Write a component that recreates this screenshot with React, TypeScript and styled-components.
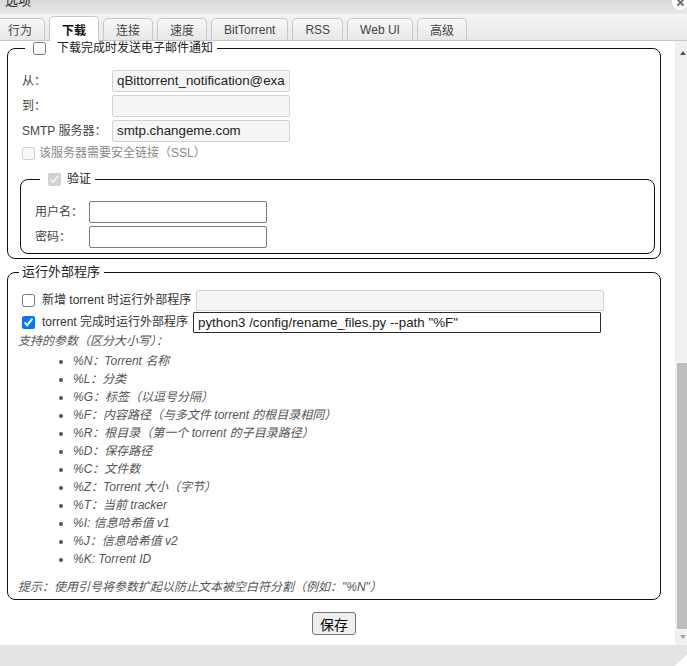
import React from 'react';
import styled, { createGlobalStyle, css } from 'styled-components';

const GlobalStyle = createGlobalStyle`
  *, *::before, *::after { box-sizing: border-box; }
  html, body { margin: 0; padding: 0; background: #fff; }
  body {
    font-family: 'Liberation Sans', 'Noto Sans CJK SC', sans-serif;
    font-size: 12px;
    color: #333;
  }
`;

const Window = styled.div`
  width: 687px;
  height: 666px;
  display: flex;
  flex-direction: column;
  overflow: hidden;
  background: #fff;
`;

const TitleBar = styled.header`
  flex: none;
  height: 14px;
  display: flex;
  align-items: flex-start;
  padding-left: 5px;
  background: linear-gradient(#d8d8d8, #e8e8e8);
  overflow: hidden;
`;

const Title = styled.span`
  margin-top: -7px;
  font-size: 13px;
  line-height: 16px;
  color: #222;
`;

const CloseButton = styled.button`
  margin: -6px -1px 0 auto;
  width: 16px;
  height: 16px;
  padding: 0;
  border: 0;
  border-radius: 50%;
  background: #fff;
  display: grid;
  place-items: center;
`;

const TabBar = styled.nav`
  flex: none;
  height: 27px;
  display: flex;
  align-items: flex-end;
  gap: 4px;
  background: linear-gradient(#f4f4f4, #e9e9e9);
  border-bottom: 1px solid #c6c6c6;

  & > :first-child {
    margin-left: -5px;
  }
`;

const Tab = styled.div<{ $active?: boolean }>`
  height: 22px;
  padding: 0 12px;
  display: flex;
  align-items: center;
  border: 1px solid #c8c8c8;
  border-bottom: 0;
  border-radius: 5px 5px 0 0;
  background: linear-gradient(#f8f8f8, #e7e7e7);
  color: #444;
  white-space: nowrap;

  ${({ $active }) =>
    $active &&
    css`
      height: 25px;
      margin-bottom: -1px;
      background: #fff;
      color: #111;
      font-weight: bold;
    `}
`;

const Body = styled.div`
  flex: 1;
  min-height: 0;
  display: flex;
`;

const Viewport = styled.main`
  flex: 1;
  min-width: 0;
  overflow: hidden;
  background: #fff;
`;

const ScrollContent = styled.div<{ $scrollTop: number }>`
  margin-top: ${({ $scrollTop }) => -$scrollTop}px;
`;

const OuterGroup = styled.fieldset<{ $top: number; $bottom: number }>`
  min-width: 0;
  width: 654px;
  margin: ${({ $top }) => $top}px 0 0 7px;
  padding: 0 6px ${({ $bottom }) => $bottom}px 10px;
  border: 1px solid #111;
  border-radius: 8px;
`;

const InnerGroup = styled.fieldset`
  min-width: 0;
  width: 635px;
  margin: 8px 0 0 2px;
  padding: 0 6px 4px 14px;
  border: 1px solid #111;
  border-radius: 8px;
`;

const Legend = styled.legend<{ $indent: number }>`
  display: flex;
  align-items: center;
  height: 16px;
  margin-left: ${({ $indent }) => $indent}px;
  padding: 0 4px;
  color: #222;
  line-height: 16px;
`;

const LegendTitle = styled.span`
  font-size: 13px;
  margin-left: -1px;
`;

const Check = styled.input.attrs({ type: 'checkbox' })<{ $gap: number }>`
  flex: none;
  width: 13px;
  height: 13px;
  margin: 0 ${({ $gap }) => $gap}px 0 4px;
`;

const FieldGrid = styled.div<{ $label: number; $pad: number }>`
  display: grid;
  grid-template-columns: ${({ $label }) => $label}px auto;
  grid-auto-rows: 25px;
  align-items: center;
  justify-content: start;
  padding: 12px 0 0 ${({ $pad }) => $pad}px;
`;

const FieldLabel = styled.label`
  color: #444;
  line-height: 16px;
  white-space: nowrap;
`;

type Tone = 'locked' | 'open' | 'dark';

const toneStyles: Record<Tone, ReturnType<typeof css>> = {
  locked: css`
    background: #f5f5f5;
    border: 1px solid #d3d3d3;
  `,
  open: css`
    background: #fff;
    border: 1px solid #7a7a7a;
  `,
  dark: css`
    background: #fff;
    border: 1px solid #2b2b2b;
    border-radius: 1px;
  `
};

const TextField = styled.input<{ $width: number; $height: number; $tone: Tone }>`
  width: ${({ $width }) => $width}px;
  height: ${({ $height }) => $height}px;
  margin: 0;
  padding: 0 4px;
  font: 13.333px 'Liberation Sans', 'Noto Sans CJK SC', sans-serif;
  color: #222;
  border-radius: 2px;
  outline: none;
  ${({ $tone }) => toneStyles[$tone]}
`;

const CheckRow = styled.div<{ $height: number }>`
  display: flex;
  align-items: center;
  height: ${({ $height }) => $height}px;
`;

const RowLabel = styled.label<{ $muted?: boolean }>`
  margin-right: 5px;
  white-space: nowrap;
  line-height: 16px;
  color: ${({ $muted }) => ($muted ? '#8a8a8a' : '#333')};
`;

const RunRows = styled.div`
  padding-top: 9px;
`;

const Note = styled.p<{ $top?: number }>`
  margin: ${({ $top }) => $top ?? 0}px 0 0;
  font-style: italic;
  color: #555;
  line-height: 16px;
`;

const ParamList = styled.ul`
  margin: 3px 0 0;
  padding-left: 55px;
  font-style: italic;
  color: #555;
  line-height: 18px;
`;

const Actions = styled.div`
  width: 668px;
  display: flex;
  justify-content: center;
  padding: 12px 0 10px;
`;

const SaveButton = styled.button`
  height: 23px;
  padding: 0 7px;
  font: 14px 'Noto Sans CJK SC', 'Liberation Sans', sans-serif;
  color: #000;
  background: #efefef;
  border: 1px solid #767676;
  border-radius: 3px;
`;

const ScrollBar = styled.div`
  flex: none;
  width: 12px;
  display: flex;
  flex-direction: column;
  background: #f0f0f0;
`;

const ScrollArrow = styled.div<{ $dir: 'up' | 'down' }>`
  flex: none;
  height: ${({ $dir }) => ($dir === 'up' ? 17 : 16)}px;
  display: flex;
  justify-content: center;
  padding-left: 4px;
  align-items: ${({ $dir }) => ($dir === 'up' ? 'flex-end' : 'center')};
  padding-bottom: ${({ $dir }) => ($dir === 'up' ? 3 : 1)}px;

  &::after {
    content: '';
    width: 0;
    height: 0;
    border-left: 3.5px solid transparent;
    border-right: 3.5px solid transparent;
    ${({ $dir }) =>
      $dir === 'up'
        ? css`
            border-bottom: 4px solid #505050;
          `
        : css`
            border-top: 4px solid #a3a3a3;
          `}
  }
`;

const ScrollRail = styled.div`
  flex: 1;
  display: flex;
  flex-direction: column;
  justify-content: flex-end;
  padding-left: 2px;
`;

const ScrollThumb = styled.div`
  height: 266px;
  background: #bdbdbd;
`;

const Footer = styled.footer`
  flex: none;
  height: 21px;
  display: flex;
  justify-content: flex-end;
  align-items: flex-end;
  background: #e4e4e4;
`;

const ResizeGrip = styled.div`
  width: 0;
  height: 0;
  border-left: 12px solid transparent;
  border-bottom: 12px solid #fff;
`;

const tabs = ['行为', '下载', '连接', '速度', 'BitTorrent', 'RSS', 'Web UI', '高级'];

const params = [
  '%N：Torrent 名称',
  '%L：分类',
  '%G：标签（以逗号分隔）',
  '%F：内容路径（与多文件 torrent 的根目录相同）',
  '%R：根目录（第一个 torrent 的子目录路径）',
  '%D：保存路径',
  '%C：文件数',
  '%Z：Torrent 大小（字节）',
  '%T：当前 tracker',
  '%I: 信息哈希值 v1',
  '%J：信息哈希值 v2',
  '%K: Torrent ID'
];

export default function App() {
  return (
    <>
      <GlobalStyle />
      <Window>
        <TitleBar>
          <Title>选项</Title>
          <CloseButton aria-label='关闭'>
            <svg width='7' height='7' viewBox='0 0 7 7'>
              <path d='M1 1L6 6M6 1L1 6' stroke='#6a6a6a' strokeWidth='1.8' strokeLinecap='round' />
            </svg>
          </CloseButton>
        </TitleBar>

        <TabBar>
          {tabs.map(name => (
            <Tab key={name} $active={name === '下载'}>
              {name}
            </Tab>
          ))}
        </TabBar>

        <Body>
          <Viewport>
            <ScrollContent $scrollTop={1}>
              <OuterGroup $top={0} $bottom={4}>
                <Legend $indent={7}>
                  <Check $gap={11} />
                  <span>下载完成时发送电子邮件通知</span>
                </Legend>
                <FieldGrid $label={90} $pad={4}>
                  <FieldLabel>从：</FieldLabel>
                  <TextField $width={178} $height={22} $tone='locked' readOnly value='qBittorrent_notification@example.com' />
                  <FieldLabel>到：</FieldLabel>
                  <TextField $width={178} $height={22} $tone='locked' readOnly value='' />
                  <FieldLabel>SMTP 服务器：</FieldLabel>
                  <TextField $width={178} $height={22} $tone='locked' readOnly value='smtp.changeme.com' />
                </FieldGrid>
                <CheckRow $height={20}>
                  <Check $gap={4} disabled />
                  <RowLabel $muted>该服务器需要安全链接（SSL）</RowLabel>
                </CheckRow>
                <InnerGroup>
                  <Legend $indent={5}>
                    <Check $gap={6} disabled defaultChecked />
                    <span>验证</span>
                  </Legend>
                  <FieldGrid $label={54} $pad={0}>
                    <FieldLabel>用户名：</FieldLabel>
                    <TextField $width={178} $height={22} $tone='open' readOnly value='' />
                    <FieldLabel>密码：</FieldLabel>
                    <TextField $width={178} $height={22} $tone='open' type='password' readOnly value='' />
                  </FieldGrid>
                </InnerGroup>
              </OuterGroup>

              <OuterGroup $top={5} $bottom={4}>
                <Legend $indent={1}>
                  <LegendTitle>运行外部程序</LegendTitle>
                </Legend>
                <RunRows>
                  <CheckRow $height={22}>
                    <Check $gap={7} />
                    <RowLabel>新增 torrent 时运行外部程序</RowLabel>
                    <TextField $width={408} $height={21} $tone='locked' readOnly value='' />
                  </CheckRow>
                  <CheckRow $height={22}>
                    <Check $gap={7} defaultChecked />
                    <RowLabel>torrent 完成时运行外部程序</RowLabel>
                    <TextField
                      $width={408}
                      $height={21}
                      $tone='dark'
                      readOnly
                      value='python3 /config/rename_files.py --path "%F"'
                    />
                  </CheckRow>
                </RunRows>
                <Note>支持的参数（区分大小写）：</Note>
                <ParamList>
                  {params.map(item => (
                    <li key={item}>{item}</li>
                  ))}
                </ParamList>
                <Note $top={11}>提示：使用引号将参数扩起以防止文本被空白符分割（例如："%N"）</Note>
              </OuterGroup>

              <Actions>
                <SaveButton>保存</SaveButton>
              </Actions>
            </ScrollContent>
          </Viewport>

          <ScrollBar>
            <ScrollArrow $dir='up' />
            <ScrollRail>
              <ScrollThumb />
            </ScrollRail>
            <ScrollArrow $dir='down' />
          </ScrollBar>
        </Body>

        <Footer>
          <ResizeGrip />
        </Footer>
      </Window>
    </>
  );
}
